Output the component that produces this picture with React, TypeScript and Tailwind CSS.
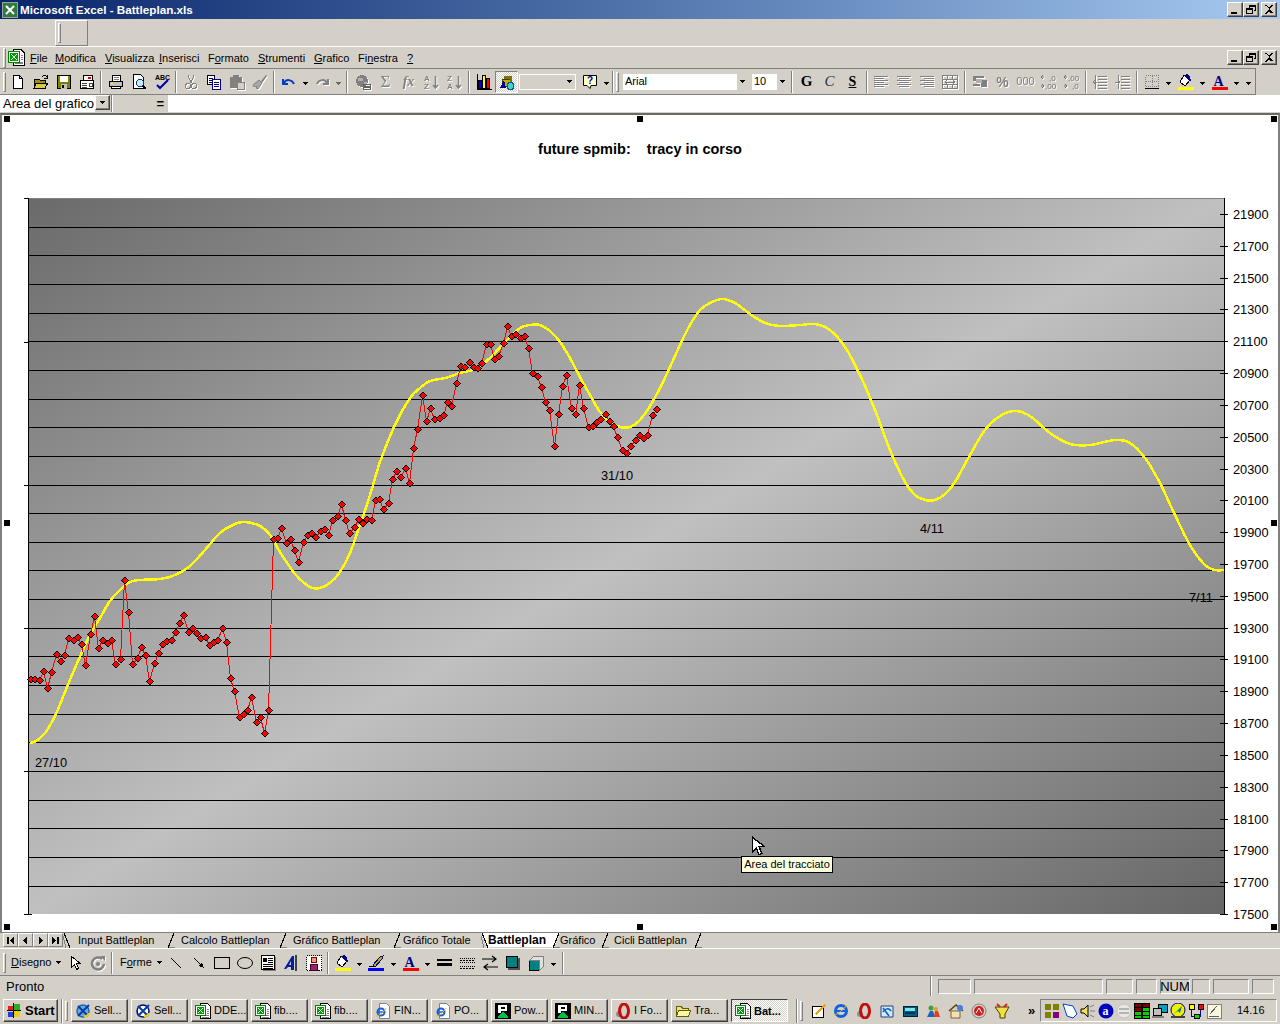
import type { ReactNode } from "react";

const raised =
  "border border-t-white border-l-white border-r-[#404040] border-b-[#404040] shadow-[inset_-1px_-1px_0_#808080]";
const dither =
  "bg-[repeating-conic-gradient(#ffffff_0_25%,#d4d0c8_0_50%)] bg-[length:2px_2px]";

const series: [number, number][] = [
  [30, 679], [34, 679], [39, 680], [43, 671], [47, 688], [51, 672], [56, 654], [60, 661], [64, 655], [68, 638],
  [73, 640], [77, 637], [81, 644], [85, 665], [90, 634], [94, 616], [98, 648], [102, 640], [107, 643], [111, 640],
  [115, 664], [120, 659], [124, 580], [128, 612], [132, 664], [137, 658], [141, 647], [145, 655], [149, 681], [154, 663],
  [158, 653], [162, 644], [166, 641], [171, 640], [175, 632], [179, 623], [183, 615], [188, 632], [192, 628], [196, 633],
  [200, 638], [205, 637], [209, 645], [213, 642], [217, 640], [222, 628], [226, 642], [230, 678], [234, 691], [239, 717],
  [243, 714], [247, 710], [251, 697], [256, 722], [260, 717], [264, 733], [268, 710], [273, 539], [277, 538], [281, 528],
  [286, 543], [290, 539], [294, 550], [298, 562], [303, 542], [307, 535], [311, 533], [315, 537], [320, 531], [324, 529],
  [328, 535], [332, 520], [337, 516], [341, 504], [345, 520], [349, 533], [354, 527], [358, 519], [362, 523], [366, 519],
  [371, 520], [375, 500], [379, 499], [383, 509], [388, 503], [392, 479], [396, 471], [400, 477], [405, 468], [409, 483],
  [413, 448], [417, 429], [422, 395], [426, 421], [430, 408], [434, 419], [439, 418], [443, 415], [447, 402], [451, 406],
  [456, 383], [460, 366], [464, 367], [469, 362], [473, 367], [477, 368], [481, 363], [486, 344], [490, 344], [494, 359],
  [498, 356], [503, 343], [507, 326], [511, 336], [515, 334], [520, 338], [524, 336], [528, 348], [532, 373], [537, 376],
  [541, 387], [545, 402], [549, 410], [554, 446], [558, 414], [562, 386], [566, 375], [571, 408], [575, 414], [579, 385],
  [583, 408], [588, 427], [592, 426], [596, 422], [600, 419], [605, 414], [609, 421], [613, 426], [617, 437], [622, 450],
  [626, 453], [630, 446], [635, 440], [639, 435], [643, 438], [647, 435], [652, 415], [656, 409],
];

const curve: [number, number][] = [
  [30, 743], [36, 741], [45, 733], [55, 716], [65, 692], [75, 668], [90, 635], [100, 618], [110, 601], [120, 590],
  [130, 582], [140, 580], [160, 579], [175, 575], [190, 566], [205, 550], [220, 533], [235, 524], [245, 522], [260, 526],
  [270, 535], [280, 552], [295, 574], [310, 587], [320, 588], [330, 583], [340, 572], [350, 553], [360, 525], [370, 495],
  [380, 462], [395, 425], [410, 398], [420, 388], [430, 381], [445, 378], [460, 373], [475, 369], [490, 358], [505, 342],
  [520, 328], [530, 325], [540, 325], [550, 331], [560, 342], [570, 358], [580, 377], [590, 395], [600, 412], [610, 422],
  [620, 427], [630, 427], [640, 420], [650, 406], [660, 388], [670, 367], [680, 345], [690, 325], [700, 310], [710, 303],
  [722, 299], [735, 303], [750, 314], [765, 323], [780, 326], [800, 325], [815, 324], [830, 330], [845, 347], [860, 375],
  [875, 410], [890, 450], [905, 482], [915, 495], [925, 500], [935, 500], [945, 494], [955, 482], [970, 455], [985, 430],
  [1000, 416], [1015, 411], [1030, 416], [1050, 433], [1070, 444], [1090, 445], [1115, 440], [1130, 443], [1145, 458],
  [1160, 483], [1175, 515], [1190, 545], [1205, 565], [1215, 570], [1224, 570],
];

const pts = (list: [number, number][]) => list.map(([x, y]) => `${x + 0.5},${y + 0.5}`).join(" ");

// catmull-rom through the sampled points, excel draws this line smoothed
function smooth(list: [number, number][]) {
  let d = `M${list[0][0]} ${list[0][1]}`;
  for (let i = 0; i < list.length - 1; i++) {
    const p0 = list[Math.max(i - 1, 0)];
    const p1 = list[i];
    const p2 = list[i + 1];
    const p3 = list[Math.min(i + 2, list.length - 1)];
    const c1x = p1[0] + (p2[0] - p0[0]) / 6;
    const c1y = p1[1] + (p2[1] - p0[1]) / 6;
    const c2x = p2[0] - (p3[0] - p1[0]) / 6;
    const c2y = p2[1] - (p3[1] - p1[1]) / 6;
    d += `C${c1x} ${c1y} ${c2x} ${c2y} ${p2[0]} ${p2[1]}`;
  }
  return d;
}

function Svg({ children, w = 16, h = 16, soft }: { children: ReactNode; w?: number; h?: number; soft?: boolean }) {
  return (
    <svg width={w} height={h} viewBox={`0 0 ${w} ${h}`} shapeRendering={soft ? "auto" : "crispEdges"} className="shrink-0">
      {children}
    </svg>
  );
}

const DownArrow = () => (
  <svg width="5" height="3" viewBox="0 0 5 3" shapeRendering="crispEdges">
    <path d="M0 0h5v1H4v1H3v1H2V2H1V1H0z" fill="#000" />
  </svg>
);

const Drop = ({ w = 10 }: { w?: number }) => (
  <div className="flex h-[16px] shrink-0 items-center justify-center pt-[3px]" style={{ width: w }}>
    <DownArrow />
  </div>
);

const DropGray = () => (
  <div className="flex h-[16px] w-[10px] shrink-0 items-center justify-center pt-[3px] opacity-50">
    <DownArrow />
  </div>
);

const Tool = ({ children, off }: { children: ReactNode; off?: boolean }) => (
  <div className={`flex h-[22px] w-[23px] shrink-0 items-center justify-center ${off ? "[filter:drop-shadow(1px_1px_0_#ffffff)]" : ""}`}>
    {children}
  </div>
);

const Sep = ({ w = 6 }: { w?: number }) => (
  <div className="flex h-[22px] shrink-0 justify-center" style={{ width: w }}>
    <div className="w-[2px] border-l border-l-[#808080] border-r border-r-white" />
  </div>
);

const Grip = () => <div className={`h-[20px] w-[3px] shrink-0 border border-t-white border-l-white border-r-[#808080] border-b-[#808080]`} />;

function WinButton({ kind }: { kind: "min" | "max" | "close" }) {
  return (
    <div className={`flex h-[15px] w-[16px] items-center justify-center bg-[#d4d0c8] ${raised}`}>
      <svg width="10" height="9" viewBox="0 0 10 9" shapeRendering="crispEdges">
        {kind === "min" && <path d="M1 7h6v2H1z" fill="#000" />}
        {kind === "max" && <path d="M3 0h7v6H8V5h1V2H4v1H3zM0 3h7v6H0zm1 2v3h5V5z" fill="#000" fillRule="evenodd" />}
        {kind === "close" && (
          <path d="M1 0h2v1h1v1h2V1h1V0h2v1H8v1H7v1H6v2h1v1h1v1h1v1H7V8H6V7H4v1H3v1H1V8h1V7h1V6h1V5h1V3H4V2H3V1H1z" fill="#000" />
        )}
      </svg>
    </div>
  );
}

// toolbar and taskbar icons, 16x16 in the old office palette
const ExcelDoc = ({ s = 16 }: { s?: number }) => (
  <svg width={s} height={s} viewBox="0 0 16 16" shapeRendering="crispEdges" className="shrink-0">
    <path d="M5.5 0.5h7l3 3v12h-10z" fill="#fff" stroke="#000" />
    <path d="M7 12.5h7M7 14h7M12 6h2M12 8h2M12 10h2" stroke="#808080" />
    <rect x="0.5" y="2.5" width="10" height="10" fill="#fff" stroke="#008000" />
    <path d="M2 4h7v7H2z" fill="#00a000" />
    <path d="M3 5l5 5M8 5l-5 5" stroke="#fff" />
  </svg>
);

const NewIcon = () => (
  <Svg>
    <path d="M3.5 1.5h6l3 3v10h-9z" fill="#fff" stroke="#000" />
    <path d="M9.5 1.5v3h3" fill="none" stroke="#000" />
  </Svg>
);
const OpenIcon = () => (
  <Svg>
    <path d="M1 5h5l1 1h5v8H1z" fill="#a09000" stroke="#000" />
    <path d="M3 9h12l-3 5H1z" fill="#d8c850" stroke="#000" />
    <path d="M9 3c1-2 3-2 5 0M14 1v3h-3" fill="none" stroke="#000" />
  </Svg>
);
const SaveIcon = () => (
  <Svg>
    <path d="M1.5 1.5h13v13h-13z" fill="#808000" stroke="#000" />
    <path d="M4 2h8v6H4z" fill="#fff" />
    <path d="M5 10h6v5H5z" fill="#c0c0c0" />
    <path d="M6 11h2v3H6z" fill="#000" />
  </Svg>
);
const MailIcon = () => (
  <Svg>
    <path d="M4.5 1.5h9v7h-9z" fill="#fff" stroke="#000" />
    <path d="M9 3h3v2H9z" fill="#e00000" />
    <path d="M1.5 6.5h13v8h-13z" fill="#fff" stroke="#000" />
    <path d="M3 9h5M3 11h5M3 13h5M10 9h3v3h-3z" stroke="#404040" fill="none" />
  </Svg>
);
const PrintIcon = () => (
  <Svg>
    <path d="M4.5 1.5h8v6h-8z" fill="#fff" stroke="#000" />
    <path d="M1.5 7.5h13v5h-13z" fill="#c0c0c0" stroke="#000" />
    <path d="M3.5 12.5h9v2h-9z" fill="#fff" stroke="#000" />
    <path d="M3 9h2" stroke="#ffff00" />
    <path d="M6 3.5h5M6 5.5h5" stroke="#808080" />
  </Svg>
);
const PreviewIcon = () => (
  <Svg>
    <path d="M2.5 0.5h7l3 3v11h-10z" fill="#fff" stroke="#000" />
    <circle cx="9" cy="9" r="3.5" fill="#c8e8f8" stroke="#004080" />
    <path d="M12 12l3 3" stroke="#000" strokeWidth="2" />
  </Svg>
);
const SpellIcon = () => (
  <Svg soft>
    <text x="1" y="6" fontFamily="Liberation Sans" fontSize="7" fontWeight="700" fill="#000">ABC</text>
    <path d="M3 11l3 3 8-8" fill="none" stroke="#0000a0" strokeWidth="2" />
  </Svg>
);
const CutIcon = () => (
  <Svg>
    <path d="M5 1l3 8M11 1l-3 8" stroke="#808080" />
    <circle cx="5" cy="12" r="2.5" fill="none" stroke="#808080" />
    <circle cx="11" cy="12" r="2.5" fill="none" stroke="#808080" />
  </Svg>
);
const CopyIcon = () => (
  <Svg>
    <path d="M1.5 1.5h7v9h-7z" fill="#fff" stroke="#000" />
    <path d="M3 4h4M3 6h4M3 8h3" stroke="#000080" />
    <path d="M6.5 5.5h8v10h-8z" fill="#fff" stroke="#000080" />
    <path d="M8 8h5M8 10h5M8 12h5" stroke="#000080" />
  </Svg>
);
const PasteIcon = () => (
  <Svg>
    <path d="M1 3h12v11H1z" fill="#808080" />
    <path d="M4 1h6v3H4z" fill="#808080" />
    <path d="M8.5 8.5h7v7h-7z" fill="#d4d0c8" stroke="#808080" />
  </Svg>
);
const BrushIcon = () => (
  <Svg soft>
    <path d="M9 7l5-6 1 1-5 7z" fill="#808080" />
    <path d="M2 10l5-4 3 3-4 6-2-1 1-2-2 1-2-1z" fill="#a8a8a8" stroke="#808080" />
  </Svg>
);
const UndoIcon = ({ gray }: { gray?: boolean }) => (
  <Svg soft>
    <path d="M2 5v5h5M3 9c2-4 8-4 10 1" fill="none" stroke={gray ? "#808080" : "#0040c0"} strokeWidth="2" />
  </Svg>
);
const RedoIcon = () => (
  <Svg soft>
    <path d="M14 5v5H9M13 9C11 5 5 5 3 10" fill="none" stroke="#808080" strokeWidth="2" />
  </Svg>
);
const GlobeIcon = () => (
  <Svg>
    <circle cx="7" cy="7" r="6" fill="#808080" />
    <path d="M3 4h5v3H3zM9 8h3v2H9z" fill="#b0b0b0" />
    <path d="M8.5 10.5h7v2h-7zM8.5 13h7v2h-7z" fill="none" stroke="#606060" />
  </Svg>
);
const Letter = ({ c, i, b, size = 14, fill = "#808080", font = "Liberation Serif" }: { c: string; i?: boolean; b?: boolean; size?: number; fill?: string; font?: string }) => (
  <span className={`leading-none ${i ? "italic" : ""} ${b ? "font-bold" : ""}`} style={{ fontFamily: font, fontSize: size, color: fill }}>
    {c}
  </span>
);
const SortIcon = ({ top, bottom }: { top: string; bottom: string }) => (
  <Svg soft>
    <text x="0" y="7" fontFamily="Liberation Sans" fontSize="8" fontWeight="700" fill="#808080">{top}</text>
    <text x="0" y="15" fontFamily="Liberation Sans" fontSize="8" fontWeight="700" fill="#808080">{bottom}</text>
    <path d="M11.5 2v12M9 11l2.5 3 2.5-3" fill="none" stroke="#808080" strokeWidth="1.5" />
  </Svg>
);
const ChartIcon = () => (
  <Svg>
    <path d="M1 0v15h15" fill="none" stroke="#000" />
    <path d="M2.5 6.5h3v8h-3z" fill="#0000e0" stroke="#000" />
    <path d="M6.5 1.5h3v13h-3z" fill="#ffff00" stroke="#000" />
    <path d="M10.5 4.5h3v10h-3z" fill="#ff0000" stroke="#000" />
  </Svg>
);
const MapIcon = () => (
  <Svg>
    <path d="M3 5h8v7H3z" fill="#c0b000" stroke="#404000" />
    <path d="M5 2h8v8h-2V5H5z" fill="#807000" />
    <path d="M1 14l4-8 2 8z" fill="#0000a0" />
    <circle cx="11.5" cy="12" r="3.5" fill="#40d0e0" stroke="#006080" />
  </Svg>
);
const HelpIcon = () => (
  <Svg soft>
    <path d="M1.5 1.5h13v10H9l-1 3-3-3H1.5z" fill="#ffffc8" stroke="#000" />
    <text x="5" y="10" fontFamily="Liberation Sans" fontSize="10" fontWeight="700" fill="#0000a0">?</text>
  </Svg>
);
const AlignIcon = ({ kind }: { kind: "l" | "c" | "r" }) => {
  const rows: [number, number][] = [[2, 14], [4, 10], [6, 14], [8, 10], [10, 14], [12, 10]];
  return (
    <Svg>
      {rows.map(([y, w]) => {
        const x = kind === "l" ? 1 : kind === "r" ? 15 - w : 8 - w / 2;
        return <rect key={y} x={x} y={y} width={w} height="1" fill="#808080" />;
      })}
    </Svg>
  );
};
const MergeIcon = () => (
  <Svg>
    <path d="M0.5 1.5h15v13h-15zM0 5.5h16M0 10.5h16M5.5 2v3M10.5 2v3M5.5 11v3M10.5 11v3" fill="none" stroke="#808080" />
    <path d="M3 8h10M5 6.5L3 8l2 1.5M11 6.5L13 8l-2 1.5" fill="none" stroke="#808080" />
  </Svg>
);
const EuroIcon = () => (
  <Svg>
    <path d="M1 2h11v2H1zM1 4h3v3H1zM9 6h6v7H9zM1 10h7v2H1z" fill="#808080" />
    <path d="M4 5h6v4H4z" fill="#b0b0b0" />
  </Svg>
);
const DecIcon = ({ inc }: { inc?: boolean }) => (
  <Svg soft>
    <text x={inc ? 8 : 4} y="7" fontFamily="Liberation Sans" fontSize="8" fill="#707070">{inc ? ",0" : ",00"}</text>
    <text x={inc ? 4 : 8} y="15" fontFamily="Liberation Sans" fontSize="8" fill="#707070">{inc ? ",00" : ",0"}</text>
    <path d="M0 3h3M2 1L0 3l2 2M0 12h3M1 10l2 2-2 2" fill="none" stroke="#707070" />
  </Svg>
);
const IndentIcon = ({ right }: { right?: boolean }) => (
  <Svg>
    <path d="M6 2h9M6 5h9M6 8h9M6 11h9M6 14h9M3 1v14" stroke="#808080" />
    {right ? <path d="M0 8h4M3 6l2 2-2 2" fill="none" stroke="#808080" /> : <path d="M1 8h4M3 6L1 8l2 2" fill="none" stroke="#808080" />}
  </Svg>
);
const BorderIcon = () => (
  <Svg>
    <path d="M1.5 1.5h13v11h-13zM8 2v11M2 7.5h12" fill="none" stroke="#808080" strokeDasharray="1 1" />
    <path d="M1 14h14" stroke="#000" />
  </Svg>
);
const FillIcon = () => (
  <Svg w={16} h={16}>
    <path d="M6 1l6 5-5 6-5-4z" fill="#fff" stroke="#000" />
    <path d="M6 1l3-1 3 2 1 5h-2z" fill="#000080" />
    <path d="M0 13h16v3H0z" fill="#ffff00" />
  </Svg>
);
const FontColorIcon = () => (
  <Svg soft>
    <text x="1.5" y="12" fontFamily="Liberation Serif" fontSize="14" fontWeight="700" fill="#000080">A</text>
    <path d="M0 13h16v3H0z" fill="#ff0000" />
  </Svg>
);
const PenIcon = () => (
  <Svg>
    <path d="M5 10l7-8 3-1-1 3-7 8z" fill="#c0b000" stroke="#000080" />
    <path d="M1 11h5" stroke="#000" />
    <path d="M0 13h16v3H0z" fill="#0000ff" />
  </Svg>
);
const CursorIcon = ({ size = 16 }: { size?: number }) => (
  <svg width={size} height={size} viewBox="0 0 16 16" shapeRendering="crispEdges">
    <path d="M4.5 1.5v11l3-3 2 5 2-1-2-5h4z" fill="#fff" stroke="#000" />
  </svg>
);
const RotateIcon = () => (
  <Svg soft>
    <path d="M12 4a6 6 0 1 0 2 5" fill="none" stroke="#808080" strokeWidth="2.5" />
    <circle cx="8" cy="9" r="2" fill="#808080" />
    <path d="M10 1h5v5z" fill="#808080" />
  </Svg>
);
const TextBoxIcon = () => (
  <Svg>
    <path d="M1.5 0.5h13v14h-13z" fill="#fff" stroke="#000" />
    <path d="M3 3h4v4H3z" fill="#000" />
    <path d="M8 3h5M8 5h5M8 7h5M3 9h10M3 11h10M3 13h10" stroke="#000" />
    <path d="M15 2h1v14H3v-1h12z" fill="#808080" />
  </Svg>
);
const WordArtIcon = () => (
  <Svg soft>
    <path d="M1 14L9 1h2v14H8v-3H5l-2 2zM6 10h2V6z" fill="#0020a0" fillRule="evenodd" />
    <path d="M13 0v16" stroke="#404040" strokeWidth="2" />
  </Svg>
);
const ClipIcon = () => (
  <Svg>
    <path d="M0.5 0.5h15v15h-15z" fill="#fff" stroke="#000" strokeDasharray="1 1" />
    <circle cx="8" cy="5" r="3" fill="#e8a070" stroke="#800000" />
    <path d="M4 15l1-6h6l1 6z" fill="#a02060" stroke="#400040" />
  </Svg>
);
const LineWeight = () => (
  <Svg>
    <path d="M1 4h15v2H1zM1 8h15v3H1z" fill="#000" />
  </Svg>
);
const DashIcon = () => (
  <Svg>
    <path d="M1 3h15M1 7h15M1 11h15" stroke="#000" strokeDasharray="1 1" />
    <path d="M1 5h15M1 13h15" stroke="#000" strokeDasharray="2 1" />
  </Svg>
);
const ArrowStyle = () => (
  <Svg soft>
    <path d="M0 4h14M10 1l4 3-4 3M16 12H2M6 9l-4 3 4 3" fill="none" stroke="#000" strokeWidth="1.2" />
  </Svg>
);
const ShadowIcon = () => (
  <Svg>
    <path d="M3 3h12v12H3z" fill="#505050" />
    <path d="M1.5 1.5h11v11h-11z" fill="#008080" stroke="#000" />
  </Svg>
);
const CubeIcon = () => (
  <Svg>
    <path d="M1.5 5.5h10v10h-10z" fill="#008080" stroke="#000" />
    <path d="M1.5 5.5l4-4h10v10l-4 4v-10z" fill="#e0e0e0" stroke="#808080" />
  </Svg>
);

const Ie = () => (
  <Svg soft>
    <circle cx="8" cy="8" r="5.5" fill="none" stroke="#1060e0" strokeWidth="3" />
    <path d="M3 8h10" stroke="#1060e0" strokeWidth="2" />
    <path d="M1 12c3 0 10-6 13-10" fill="none" stroke="#f0c000" strokeWidth="1" />
  </Svg>
);
const IeDoc = () => (
  <Svg soft>
    <path d="M4.5 0.5h7l3 3v12h-10z" fill="#fff" stroke="#808080" />
    <circle cx="6" cy="9" r="3.5" fill="none" stroke="#1060e0" strokeWidth="2" />
    <path d="M2 9h8" stroke="#1060e0" strokeWidth="1.5" />
    <path d="M1 13c3 0 8-4 10-8" fill="none" stroke="#f0c000" />
  </Svg>
);
const PowIcon = () => (
  <Svg>
    <path d="M0 0h16v16H0z" fill="#000" />
    <path d="M3 2h9v6H6v2H3zM6 4v2h4V4z" fill="#fff" fillRule="evenodd" />
    <path d="M8 9h1v1h1v1h1v1h1v1h1v2H3v-2h1v-1h1v-1h1v-1h1V9z" fill="#00c040" />
  </Svg>
);
const MailX = ({ dark }: { dark?: boolean }) => (
  <Svg soft>
    <circle cx="8" cy="8" r="6" fill={dark ? "#ffffff" : "#70a8e0"} stroke={dark ? "#000080" : "#2060c0"} strokeWidth="1.5" />
    <path d="M3 13L14 2M3 3l10 10" stroke="#0040a0" strokeWidth="2" />
    <path d="M9 13a4 4 0 0 0 5-3" fill="none" stroke="#f0d000" strokeWidth="2" />
  </Svg>
);
const Opera = ({ gray }: { gray?: boolean }) => (
  <Svg soft>
    {gray && <circle cx="4" cy="11" r="3" fill="#909090" />}
    <ellipse cx="9" cy="8" rx="4.5" ry="7" fill="none" stroke="#c01010" strokeWidth="3" />
  </Svg>
);
const Folder = () => (
  <Svg>
    <path d="M1.5 3.5h5l1 2h6v8h-12z" fill="#f0e088" stroke="#606000" />
    <path d="M3.5 7.5h12l-2 6h-12z" fill="#fff4a8" stroke="#606000" />
  </Svg>
);

function TaskButton({ icon, label, active }: { icon: ReactNode; label: string; active?: boolean }) {
  return (
    <div
      className={`flex h-[23px] w-[57px] shrink-0 items-center gap-[3px] pl-[3px] text-[11px] ${
        active
          ? `${dither} border border-t-[#404040] border-l-[#404040] border-r-white border-b-white pt-[1px] font-bold`
          : `bg-[#d4d0c8] ${raised}`
      }`}
    >
      {icon}
      <span className="whitespace-nowrap">{label}</span>
    </div>
  );
}

const Slant = ({ back, white }: { back?: boolean; white?: boolean }) => (
  <svg width="8" height="15" viewBox="0 0 8 15" shapeRendering="crispEdges" className="shrink-0">
    {white && <path d={back ? "M0 0h8v15H6z" : "M0 0h8L2 15H0z"} fill="#fff" />}
    <path d={back ? "M1 0l6 15" : "M7 0L1 15"} stroke="#000" fill="none" />
    <path d={back ? "M0 3l3 12" : "M2 14.5h6"} stroke="#808080" fill="none" />
  </svg>
);

const NavButton = ({ d }: { d: string }) => (
  <div className={`flex h-[14px] w-[15px] shrink-0 items-center justify-center bg-[#d4d0c8] border border-t-white border-l-white border-r-[#808080] border-b-[#808080]`}>
    <svg width="9" height="9" viewBox="0 0 9 9" shapeRendering="crispEdges">
      <path d={d} fill="#000" />
    </svg>
  </div>
);

const Panel = ({ w, children }: { w: number; children?: ReactNode }) => (
  <div
    className="flex h-[15px] shrink-0 items-center justify-center border border-t-[#808080] border-l-[#808080] border-r-white border-b-white text-[13px] leading-none"
    style={{ width: w }}
  >
    {children}
  </div>
);

const Handle = ({ className }: { className: string }) => <div className={`absolute h-[6px] w-[6px] bg-black ${className}`} />;

const menu: [string, string, string, number][] = [
  ["", "F", "ile", 25],
  ["", "M", "odifica", 50],
  ["", "V", "isualizza", 54],
  ["", "I", "nserisci", 49],
  ["F", "o", "rmato", 50],
  ["", "S", "trumenti", 56],
  ["", "G", "rafico", 44],
  ["Fi", "n", "estra", 49],
  ["", "?", "", 12],
];

const gridRows = Array.from({ length: 24 }, (_, i) => Math.round(198 + 28.65 * (i + 1)));
const leftTicks = [198, 342, 485, 628, 771];
const axis = Array.from({ length: 23 }, (_, i) => ({ label: String(21900 - i * 200), y: Math.round(214 + i * 31.82) }));

function Chart() {
  return (
    <svg viewBox="28 198 1196 716" className="absolute inset-0 h-full w-full overflow-visible" shapeRendering="crispEdges">
      <path d="M28 198.5h1196" stroke="#808080" />
      {gridRows.map((y) => (
        <path key={y} d={`M28 ${y + 0.5}H1224`} stroke="#000" />
      ))}
      <path d="M28.5 198V915M1224.5 198V915" stroke="#000" />
      {leftTicks.map((y) => (
        <path key={y} d={`M24 ${y + 0.5}h4`} stroke="#000" />
      ))}
      <path d="M24 914.5h8" stroke="#000" />
      {axis.map((t) => (
        <path key={t.y} d={`M1220 ${t.y + 0.5}h8`} stroke="#000" />
      ))}
      <path d={smooth(curve)} fill="none" stroke="#ffff00" strokeWidth="2.5" />
      <polyline points={pts(series)} fill="none" stroke="#ff0000" />
      {series.map(([x, y]) => (
        <g key={`${x}-${y}`}>
          <path d={`M${x + 0.5} ${y - 3.5}l4 4-4 4-4-4z`} fill="#000" />
          <path d={`M${x + 0.5} ${y - 2.5}l3 3-3 3-3-3z`} fill="#ff0000" />
        </g>
      ))}
      <g fontFamily="Liberation Sans" fontSize="12.8" fill="#000" shapeRendering="auto">
        {axis.map((t) => (
          <text key={t.label} x="1233" y={t.y + 5}>{t.label}</text>
        ))}
        <text x="35" y="767">27/10</text>
        <text x="601" y="480">31/10</text>
        <text x="920" y="533">4/11</text>
        <text x="1189" y="602">7/11</text>
      </g>
    </svg>
  );
}

export default function App() {
  return (
    <div className="flex h-[1024px] w-[1280px] flex-col overflow-hidden bg-[#d4d0c8] font-['Liberation_Sans',sans-serif] text-[11px] text-black">
      {/* title bar */}
      <div className="flex h-[19px] shrink-0 items-center bg-gradient-to-r from-[#0a246a] to-[#a6caf0] pl-[2px] pr-[3px]">
        <div className="flex h-[16px] w-[16px] items-center justify-center border border-[#a0a0a0] bg-[#2f7a3f]">
          <svg width="12" height="12" viewBox="0 0 12 12"><path d="M2 2l8 8M10 2l-8 8" stroke="#fff" strokeWidth="2" /></svg>
        </div>
        <span className="ml-[2px] text-[11.7px] font-bold text-white">Microsoft Excel - Battleplan.xls</span>
        <div className="ml-auto flex">
          <WinButton kind="min" />
          <WinButton kind="max" />
          <div className="w-[2px]" />
          <WinButton kind="close" />
        </div>
      </div>

      {/* empty docked bar */}
      <div className="flex h-[28px] shrink-0 items-start border-b border-b-white pl-[55px] pt-[1px]">
        <div className="flex h-[26px] w-[33px] items-center border border-t-white border-l-white border-r-[#808080] border-b-[#808080] pl-[2px]">
          <div className="h-[20px] w-[3px] border border-t-white border-l-white border-r-[#808080] border-b-[#808080]" />
        </div>
      </div>

      {/* menu */}
      <div className="flex h-[21px] shrink-0 items-center pl-[3px] pr-[3px]">
        <Grip />
        <div className="ml-[2px] mr-[2px]"><ExcelDoc s={17} /></div>
        <div className="ml-[3px] flex pt-[2px]">
          {menu.map(([pre, key, post, w]) => (
            <span key={key + post} className="whitespace-nowrap" style={{ width: w }}>
              {pre}
              <span className="underline">{key}</span>
              {post}
            </span>
          ))}
        </div>
        <div className="ml-auto flex">
          <WinButton kind="min" />
          <WinButton kind="max" />
          <div className="w-[2px]" />
          <WinButton kind="close" />
        </div>
      </div>

      {/* standard + format toolbars */}
      <div className="flex h-[27px] w-[1256px] shrink-0 items-center border-y border-y-[#808080] pl-[3px] pr-[1px] border-r border-r-[#808080]">
        <Grip />
        <Tool><NewIcon /></Tool>
        <Tool><OpenIcon /></Tool>
        <Tool><SaveIcon /></Tool>
        <Tool><MailIcon /></Tool>
        <Sep />
        <Tool><PrintIcon /></Tool>
        <Tool><PreviewIcon /></Tool>
        <Tool><SpellIcon /></Tool>
        <Sep />
        <Tool off><CutIcon /></Tool>
        <Tool><CopyIcon /></Tool>
        <Tool off><PasteIcon /></Tool>
        <Tool off><BrushIcon /></Tool>
        <Sep />
        <Tool><UndoIcon /></Tool>
        <Drop />
        <Tool off><RedoIcon /></Tool>
        <DropGray />
        <Sep w={8} />
        <Tool off><GlobeIcon /></Tool>
        <Tool off><Letter c="Σ" size={17} /></Tool>
        <Tool off><Letter c="fx" i b size={14} /></Tool>
        <Tool off><SortIcon top="A" bottom="Z" /></Tool>
        <Tool off><SortIcon top="Z" bottom="A" /></Tool>
        <Sep />
        <Tool><ChartIcon /></Tool>
        <div className={`flex h-[22px] w-[23px] shrink-0 items-center justify-center border border-t-[#808080] border-l-[#808080] border-r-white border-b-white ${dither}`}>
          <MapIcon />
        </div>
        <div className="ml-[1px] flex h-[16px] w-[57px] shrink-0 items-center justify-end border border-white pr-[3px]">
          <DownArrow />
        </div>
        <div className="ml-[2px]"><Tool><HelpIcon /></Tool></div>
        <Drop />
        <Sep w={3} />
        <div className="ml-[2px]"><Grip /></div>
        <div className="ml-[4px] flex h-[16px] w-[125px] shrink-0 items-center justify-between bg-white pl-[2px] text-[11px]">
          <span>Arial</span>
          <div className="flex h-full w-[11px] items-center justify-center bg-[#d4d0c8]"><DownArrow /></div>
        </div>
        <div className="ml-[4px] flex h-[16px] w-[36px] shrink-0 items-center justify-between bg-white pl-[2px] text-[11px]">
          <span>10</span>
          <div className="flex h-full w-[11px] items-center justify-center bg-[#d4d0c8]"><DownArrow /></div>
        </div>
        <Sep w={7} />
        <Tool><Letter c="G" b size={15} fill="#000" /></Tool>
        <Tool><Letter c="C" i size={15} fill="#303030" /></Tool>
        <Tool><span className="font-['Liberation_Serif'] text-[14px] font-bold leading-none underline">S</span></Tool>
        <Sep w={5} />
        <Tool off><AlignIcon kind="l" /></Tool>
        <Tool off><AlignIcon kind="c" /></Tool>
        <Tool off><AlignIcon kind="r" /></Tool>
        <Tool off><MergeIcon /></Tool>
        <Sep w={7} />
        <Tool off><EuroIcon /></Tool>
        <Tool off><Letter c="%" b size={14} font="Liberation Sans" /></Tool>
        <Tool off><Letter c="000" size={11} font="Liberation Sans" /></Tool>
        <Tool off><DecIcon inc /></Tool>
        <Tool off><DecIcon /></Tool>
        <Sep w={5} />
        <Tool off><IndentIcon /></Tool>
        <Tool off><IndentIcon right /></Tool>
        <Sep />
        <Tool><BorderIcon /></Tool>
        <Drop w={11} />
        <Tool><FillIcon /></Tool>
        <Drop w={11} />
        <Tool><FontColorIcon /></Tool>
        <Drop w={11} />
        <Drop w={12} />
      </div>

      {/* formula bar */}
      <div className="flex h-[18px] shrink-0 items-start">
        <div className="flex h-[17px] w-[95px] items-center bg-white pl-[3px] text-[13px] leading-none">Area del grafico</div>
        <div className={`flex h-[15px] w-[15px] shrink-0 items-center justify-center bg-[#d4d0c8] ${raised}`}><DownArrow /></div>
        <div className="ml-[1px] h-[17px] w-[2px] border-l border-l-[#808080] border-r border-r-white" />
        <div className="flex h-[17px] w-[55px] items-center justify-end pr-[4px] text-[13px] font-bold leading-none">=</div>
        <div className="h-[17px] flex-1 bg-white" />
      </div>

      {/* chart sheet */}
      <div className="relative flex h-[819px] shrink-0 flex-col items-start border-x-2 border-t-2 border-x-[#808080] border-t-[#6a6a6a] bg-white">
        <div className="mt-[27px] flex h-[16px] w-full items-center justify-center">
          <span className="whitespace-pre text-[14.5px] font-bold">future spmib:    tracy in corso</span>
        </div>
        <div className="relative ml-[26px] mt-[40px] h-[716px] w-[1196px] bg-[linear-gradient(to_bottom_right,#6a6a6a,#c0c0c0_50%,#666666)]">
          <Chart />
        </div>
        <Handle className="left-[2px] top-[1px]" />
        <Handle className="left-[635px] top-[1px]" />
        <Handle className="left-[1269px] top-[1px]" />
        <Handle className="left-[2px] top-[405px]" />
        <Handle className="left-[1269px] top-[405px]" />
        <Handle className="left-[2px] top-[809px]" />
        <Handle className="left-[635px] top-[809px]" />
        <Handle className="left-[1269px] top-[809px]" />
        <div className="absolute left-[744px] top-[720px]"><CursorIcon size={22} /></div>
        <div className="absolute left-[739px] top-[741px] flex h-[17px] w-[92px] items-center justify-center border border-black bg-[#ffffe1] text-[11px] leading-none">
          Area del tracciato
        </div>
      </div>

      {/* sheet tabs */}
      <div className="flex h-[17px] shrink-0 items-start border-y border-t-[#808080] border-b-white pl-[3px] leading-[14px]">
        <NavButton d="M1 1h2v7H1zM8 1v7L4 4.5z" />
        <NavButton d="M6 1v7L2 4.5z" />
        <NavButton d="M3 1v7l4-3.5z" />
        <NavButton d="M1 1v7l4-3.5zM6 1h2v7H6z" />
        <Slant back />
        <span className="ml-[7px] w-[89px] whitespace-nowrap">Input Battleplan</span>
        <Slant />
        <span className="ml-[6px] w-[98px] whitespace-nowrap">Calcolo Battleplan</span>
        <Slant />
        <span className="ml-[6px] w-[100px] whitespace-nowrap">Gráfico Battleplan</span>
        <Slant />
        <span className="ml-[2px] w-[78px] whitespace-nowrap">Gráfico Totale</span>
        <Slant back white />
        <span className="ml-[-1px] w-[64px] whitespace-nowrap bg-white text-[12px] font-bold">Battleplan</span>
        <Slant white />
        <span className="ml-[0px] w-[41px] whitespace-nowrap">Gráfico</span>
        <Slant />
        <span className="ml-[5px] w-[80px] whitespace-nowrap">Cicli Battleplan</span>
        <Slant />
      </div>

      {/* drawing toolbar */}
      <div className="flex h-[27px] shrink-0 items-center border-b border-b-[#808080] pl-[3px] pt-[1px]">
        <Grip />
        <div className="flex w-[57px] shrink-0 items-center gap-[5px] pl-[5px]">
          <span><span className="underline">D</span>isegno</span>
          <DownArrow />
        </div>
        <Tool><CursorIcon /></Tool>
        <Tool off><RotateIcon /></Tool>
        <Sep />
        <div className="flex w-[49px] shrink-0 items-center gap-[5px] pl-[5px]">
          <span>F<span className="underline">o</span>rme</span>
          <DownArrow />
        </div>
        <Tool><Svg><path d="M3 3l10 10" stroke="#000" /></Svg></Tool>
        <Tool><Svg><path d="M3 3l8 8" stroke="#000" /><path d="M13 13l-6-2 4-4z" fill="#000" /></Svg></Tool>
        <Tool><Svg><path d="M0.5 2.5h15v11h-15z" fill="none" stroke="#000" /></Svg></Tool>
        <Tool><Svg soft><ellipse cx="8" cy="8" rx="7.5" ry="5.5" fill="none" stroke="#000" /></Svg></Tool>
        <Tool><TextBoxIcon /></Tool>
        <Tool><WordArtIcon /></Tool>
        <Tool><ClipIcon /></Tool>
        <Sep />
        <Tool><FillIcon /></Tool>
        <Drop />
        <Tool><PenIcon /></Tool>
        <Drop w={12} />
        <Tool><FontColorIcon /></Tool>
        <Drop />
        <Tool><LineWeight /></Tool>
        <Tool><DashIcon /></Tool>
        <Tool><ArrowStyle /></Tool>
        <Tool><ShadowIcon /></Tool>
        <Tool><CubeIcon /></Tool>
        <Drop w={13} />
        <Sep />
      </div>

      {/* status bar */}
      <div className="flex h-[20px] shrink-0 items-center pl-[6px]">
        <span className="w-[924px] shrink-0 text-[13px] leading-none">Pronto</span>
        <div className="h-[20px] w-[2px] shrink-0 border-l border-l-[#808080] border-r border-r-white" />
        <div className="ml-[6px] flex">
          <Panel w={33} />
          <div className="w-[3px]" />
          <Panel w={129} />
          <div className="w-[3px]" />
          <Panel w={27} />
          <div className="w-[3px]" />
          <Panel w={21} />
          <div className="w-[3px]" />
          <Panel w={30}>NUM</Panel>
          <div className="w-[2px]" />
          <Panel w={18} />
          <div className="w-[3px]" />
          <Panel w={36} />
          <div className="w-[3px]" />
          <Panel w={22} />
        </div>
      </div>

      {/* taskbar */}
      <div className="flex h-[28px] shrink-0 items-center pl-[3px] pt-[1px]">
        <div className={`flex h-[23px] w-[55px] shrink-0 items-center gap-[2px] pl-[3px] bg-[#d4d0c8] text-[13px] font-bold ${raised}`}>
          <Svg>
            <path d="M1 3h5v5H1z" fill="#e02020" />
            <path d="M7 1h6v6H7z" fill="#20b020" />
            <path d="M1 9h5v5H1z" fill="#2040e0" />
            <path d="M7 8h6v6H7z" fill="#f0d000" />
            <path d="M6 0h1v15H6zM0 7h14v1H0z" fill="#000" />
          </Svg>
          <span>Start</span>
        </div>
        <div className="ml-[3px] h-[24px] w-[2px] border-l border-l-[#808080] border-r border-r-white" />
        <div className="ml-[2px] h-[20px] w-[3px] border border-t-white border-l-white border-r-[#808080] border-b-[#808080]" />
        <div className="ml-[3px] flex gap-[3px]">
          <TaskButton icon={<MailX />} label="Sell..." />
          <TaskButton icon={<MailX dark />} label="Sell..." />
          <TaskButton icon={<ExcelDoc />} label="DDE..." />
          <TaskButton icon={<ExcelDoc />} label="fib...." />
          <TaskButton icon={<ExcelDoc />} label="fib...." />
          <TaskButton icon={<IeDoc />} label="FIN..." />
          <TaskButton icon={<IeDoc />} label="PO..." />
          <TaskButton icon={<PowIcon />} label="Pow..." />
          <TaskButton icon={<PowIcon />} label="MIN..." />
          <TaskButton icon={<Opera gray />} label="I Fo..." />
          <TaskButton icon={<Folder />} label="Tra..." />
          <TaskButton icon={<ExcelDoc />} label="Bat..." active />
        </div>
        <div className="ml-[8px] h-[24px] w-[2px] border-l border-l-[#808080] border-r border-r-white" />
        <div className="ml-[2px] h-[20px] w-[3px] border border-t-white border-l-white border-r-[#808080] border-b-[#808080]" />
        <div className="ml-[3px] flex w-[233px] items-center">
          <Tool>
            <Svg><path d="M2 3h11v11H2z" fill="#fff" stroke="#000" /><path d="M5 11L14 1l2 1-9 10z" fill="#f0a000" /></Svg>
          </Tool>
          <Tool><Ie /></Tool>
          <Tool><Opera gray /></Tool>
          <Tool>
            <Svg soft><path d="M2 3h12v11H2z" fill="#d8e8f8" stroke="#204080" /><path d="M4 9c2-4 6-4 8-1M4 5l6 8" fill="none" stroke="#0060c0" strokeWidth="1.5" /></Svg>
          </Tool>
          <Tool>
            <Svg><path d="M1 3h14v10H1z" fill="#006080" stroke="#002040" /><path d="M3 5h10v3H3z" fill="#80e0f0" /><path d="M3 9h10v2H3z" fill="#003050" /></Svg>
          </Tool>
          <Tool>
            <Svg soft><circle cx="6" cy="5" r="2.5" fill="#40a040" /><path d="M2 14l3-6h3l2 6z" fill="#2060c0" /><circle cx="11" cy="6" r="2" fill="#e0a020" /><path d="M9 14l1-6h3l2 6z" fill="#e04020" /></Svg>
          </Tool>
          <Tool>
            <Svg soft><path d="M1 8l7-6 7 6" fill="none" stroke="#604000" strokeWidth="1.5" /><path d="M3 8h9v7H3z" fill="#f0e0c0" stroke="#806020" /><circle cx="12" cy="5" r="3" fill="#4080e0" /></Svg>
          </Tool>
          <Tool>
            <Svg soft><circle cx="8" cy="8" r="7" fill="#d0d0d0" stroke="#808080" /><circle cx="8" cy="8" r="5" fill="#d02020" /><path d="M5 10l3-5 3 5" fill="none" stroke="#fff" /></Svg>
          </Tool>
          <Tool>
            <Svg soft><path d="M1 4h14l-4 7v4H6v-4z" fill="#f0e040" stroke="#404000" /><path d="M3 1l3 3M13 1l-3 3" stroke="#e02020" strokeWidth="2" /></Svg>
          </Tool>
          <span className="ml-[15px] w-[8px] text-[13px] font-bold leading-none">»</span>
        </div>
        <div className="ml-[1px] mr-[3px] flex h-[23px] flex-1 items-center border border-t-[#808080] border-l-[#808080] border-r-white border-b-white pl-[3px]">
          <div className="flex w-[193px] shrink-0 items-center gap-[2px]">
            <Svg>
              <path d="M1 1h6v6H1zM9 1h6v6H9zM1 9h6v6H1z" fill="#808000" />
              <path d="M9 9h6v6H9z" fill="#800080" />
            </Svg>
            <Svg soft><path d="M1 1l10 2 4 8-4 4-6-2z" fill="#fff" stroke="#0040e0" /></Svg>
            <Svg soft><path d="M1 6h3l4-4v12l-4-4H1z" fill="#f0e060" stroke="#000" /><path d="M10 8h5M10 4l4-2M10 12l4 2" stroke="#808080" /></Svg>
            <Svg soft><circle cx="8" cy="8" r="7.5" fill="#0000c0" /><text x="4.5" y="12" fontFamily="Liberation Serif" fontWeight="700" fontSize="12" fill="#fff">a</text></Svg>
            <Svg soft><circle cx="8" cy="8" r="7" fill="#e8e8e8" stroke="#c0c0c0" /><path d="M3 6h10M3 10h10" stroke="#808080" /></Svg>
            <Svg><path d="M0 0h16v16H0z" fill="#000" /><path d="M1 1h6v3H1zM9 1h6v3H9zM1 5h6v3H1z" fill="#800000" /><path d="M9 5h6v3H9zM1 9h6v3H1zM9 9h6v3H9zM1 13h6v2H1zM9 13h6v2H9z" fill="#00d000" /></Svg>
            <Svg><path d="M6 1h9v8H6z" fill="#00a0c0" stroke="#000" /><path d="M1 5h8v7H1z" fill="#c0c0c0" stroke="#000" /><path d="M0 13h12v2H0z" fill="#808080" /></Svg>
            <Svg soft><circle cx="8" cy="7" r="7" fill="#f0f000" stroke="#000080" /><path d="M4 11L12 3l-2 7-2-2z" fill="#008080" /><path d="M1 13h14v2H1z" fill="#404040" /></Svg>
            <Svg><path d="M1 1h5v5H1z" fill="#ffff00" stroke="#000" /><path d="M10 1h5v5h-5z" fill="#ff0000" stroke="#000" /><path d="M6 11h5v4H6z" fill="#00e000" stroke="#000" /><path d="M3 7v6h3M12 7v6h-1" fill="none" stroke="#0000c0" /></Svg>
            <Svg><path d="M1 1h14v14H1z" fill="#f8f8e0" stroke="#808080" /><path d="M4 11l7-8M3 13h10" stroke="#606060" /></Svg>
          </div>
          <span className="text-[11px] leading-none">14.16</span>
        </div>
      </div>
    </div>
  );
}
